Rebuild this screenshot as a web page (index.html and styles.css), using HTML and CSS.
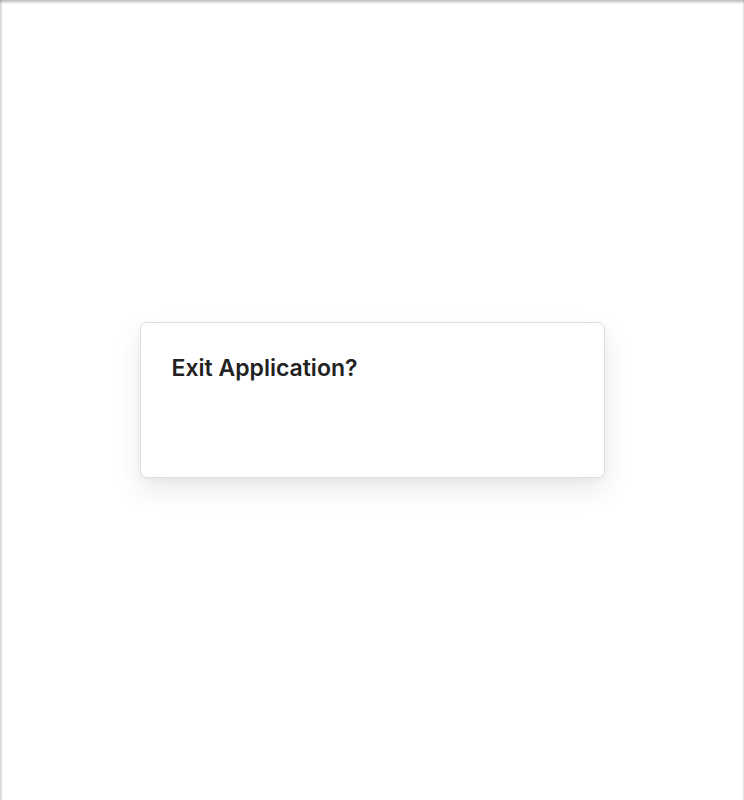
FILE: index.html
```html
<!DOCTYPE html>
<html lang="en">
<head>
<meta charset="utf-8">
<title>Exit Application?</title>
<link rel="stylesheet" href="styles.css">
</head>
<body>
<main class="screen">
  <section class="dialog" role="dialog" aria-labelledby="dlg-title">
    <h2 class="dialog-title" id="dlg-title">Exit Application?</h2>
    <div class="dialog-body"></div>
  </section>
</main>
</body>
</html>
```

FILE: styles.css
```css
html, body {
  margin: 0;
  padding: 0;
  height: 100%;
  background: #ffffff;
}

.screen {
  box-sizing: border-box;
  height: 100vh;
  display: flex;
  align-items: center;
  justify-content: center;
  font-family: Inter, "Noto Sans", sans-serif;
  box-shadow:
    inset 0 3px 3px -1px rgba(0, 0, 0, 0.28),
    inset 2px 0 0 #e4e4e4,
    inset -1px 0 0 #ececec;
}

.dialog {
  box-sizing: border-box;
  width: 465px;
  height: 156px;
  padding: 31px 31px;
  background: #ffffff;
  border: 1px solid #dedede;
  border-radius: 7px;
  box-shadow: 0 12px 28px rgba(0, 0, 0, 0.09), 0 2px 6px rgba(0, 0, 0, 0.04);
}

.dialog-title {
  margin: 0;
  font-size: 23px;
  font-weight: 600;
  line-height: 28px;
  color: #222222;
}
```
